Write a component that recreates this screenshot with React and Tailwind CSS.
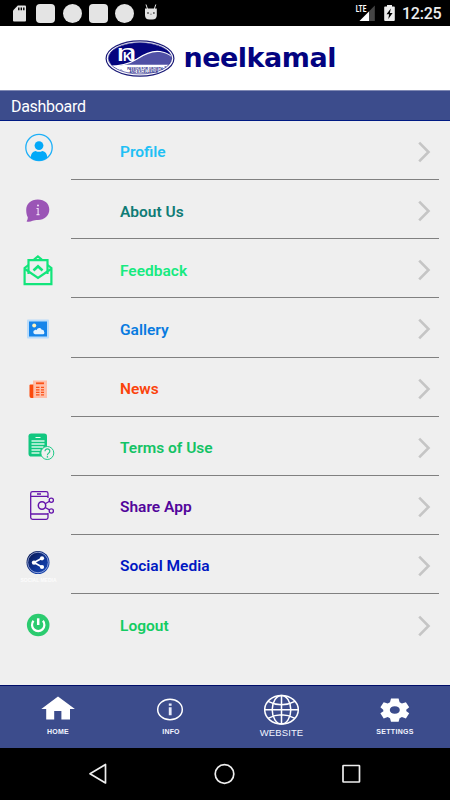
import React from 'react';

const ProfileIcon = () => (
  <svg width="71" height="58" viewBox="0 0 71 58" fill="#03a9f8">
    <circle cx="39" cy="26.5" r="13.2" fill="none" stroke="#1eb0f8" strokeWidth="1.3" />
    <circle cx="39" cy="24.6" r="4.4" />
    <path d="M30.8 36.5c0-4 1.8-6.2 4.8-6.6 2.2 1.2 4.6 1.2 6.8 0 3 .4 4.8 2.6 4.8 6.6-4.4 4.4-12 4.4-16.4 0z" />
  </svg>
);

const AboutIcon = () => (
  <svg width="71" height="58" viewBox="0 0 71 58">
    <path
      d="M37.8 19.4c7 0 11.5 4.2 11.5 10 0 6.3-4.9 10.5-11.3 10.5-2.2 0-4 .2-5.4.9-1.8 1-4.2 1.2-6 .7.6-1.2 1.2-2.2 1.2-4.2-1.1-1.8-1.6-4.9-1.6-7.4 0-6 4.6-10.5 11.6-10.5z"
      fill="#9b55b6"
    />
    <circle cx="38" cy="25.4" r="1" fill="#f3e3fa" />
    <path d="M36.5 28.5h1.6v6M36.5 34.7h3" fill="none" stroke="#eedcf5" strokeWidth="1.2" />
  </svg>
);

const FeedbackIcon = () => (
  <svg width="71" height="58" viewBox="0 0 71 58" fill="none" stroke="#12e57b" strokeWidth="2.2">
    <path d="M28.5 35V21.2h19V35" />
    <path d="M28.5 26l-3.9 3v16.2h26.8V29l-3.9-3" />
    <path d="M25 30l13 8.8L51 30" />
    <path d="M34 20.5l3.9-3.2 3.9 3.2" />
    <path d="M33.5 31.5l4.5-4.3 4.5 4.3" strokeWidth="2.6" />
  </svg>
);

const GalleryIcon = () => (
  <svg width="71" height="58" viewBox="0 0 71 58">
    <rect x="27" y="21.5" width="22" height="19" rx="1" fill="#bbdcfa" />
    <rect x="29" y="23.5" width="18" height="15" fill="#1685ea" />
    <circle cx="34.2" cy="27.5" r="2" fill="#fff3bd" />
    <path d="M35 36.2a2.2 2.2 0 0 1 0-4.3c.9-.1 1.2.1 1.7.3.5-2.7 4.2-3 5-.4 1.7-.3 2.5.8 2.3 2 .8 1 .4 2.4-.9 2.4z" fill="#e6f3fd" />
  </svg>
);

const NewsIcon = () => (
  <svg width="71" height="58" viewBox="0 0 71 58">
    <rect x="33" y="22.5" width="14" height="17.5" fill="#ffbfa9" />
    <path d="M29.5 27.5q0-1 1-1h2.8V40h-2q-1.8 0-1.8-2z" fill="#fb4a0c" />
    <g fill="none" stroke="#fb5116">
      <path d="M36 25.3h8" strokeWidth="1.8" />
      <path d="M36 29.3h3.5m1.5 0h3M36 31.8h3.5m1.5 0h3M36 34.3h3.5m1.5 0h3M36 36.8h3.5m1.5 0h3" strokeWidth="1.2" />
    </g>
  </svg>
);

const TermsIcon = () => (
  <svg width="71" height="58" viewBox="0 0 71 58">
    <rect x="28.5" y="16.5" width="18.5" height="23" rx="2.8" fill="#12c780" />
    <path d="M35.5 20.5h5" stroke="#efffef" strokeWidth="1" />
    <path d="M31.5 24h13M31.5 27h13M31.5 30h12M31.5 33h9M31.5 36h8" stroke="#d5f7e5" strokeWidth="1.3" />
    <circle cx="47.3" cy="36" r="6.5" fill="#efefef" stroke="#21ca88" strokeWidth="1" />
    <path d="M45 34.2c0-3.2 4.9-3 4.8 0 0 2-2.4 1.9-2.4 4" fill="none" stroke="#21ca88" strokeWidth="1.2" />
    <circle cx="47.4" cy="39.9" r=".8" fill="#21ca88" />
  </svg>
);

const ShareAppIcon = () => (
  <svg width="71" height="58" viewBox="0 0 71 58" fill="none" stroke="#6414ab" strokeWidth="1.3">
    <path d="M48 22v-4.5q0-1.800-1.800-1.800H32.500q-1.800 0-1.800 1.800v24q0 1.800 1.800 1.800h13.700q1.800 0 1.800-1.800V37" />
    <path d="M31 20.3h17M31 38h17M37 18h4" />
    <circle cx="42" cy="29.5" r="3.7" strokeWidth="1.5" />
    <circle cx="51.3" cy="24.2" r="2.1" />
    <circle cx="51.3" cy="35" r="2.1" />
    <path d="M45.2 27.7l4.3-2.5M45.2 31.5l4.3 2.4" />
  </svg>
);

const SocialIcon = () => (
  <svg width="71" height="58" viewBox="0 0 71 58">
    <defs>
      <linearGradient id="ball" x1="0" y1="0" x2="1" y2="1">
        <stop offset="0" stopColor="#061245" />
        <stop offset=".6" stopColor="#10379b" />
        <stop offset="1" stopColor="#1748b4" />
      </linearGradient>
    </defs>
    <circle cx="38" cy="27.5" r="11.5" fill="url(#ball)" />
    <circle cx="38" cy="27.5" r="10.3" fill="none" stroke="#c1cdef" strokeWidth=".7" />
    <path d="M42 23.3l-8 4.3 8 4.4" fill="none" stroke="#fff" strokeWidth="1.7" />
    <g fill="#fff">
      <circle cx="42" cy="23.3" r="2.1" />
      <circle cx="34" cy="27.6" r="2.2" />
      <circle cx="42" cy="32" r="2.1" />
    </g>
    <text x="20.5" y="46.6" textLength="36" fontFamily="Liberation Sans, sans-serif" fontWeight="700" fontSize="5" fill="#fcfcfc">
      SOCIAL MEDIA
    </text>
  </svg>
);

const LogoutIcon = () => (
  <svg width="71" height="58" viewBox="0 0 71 58">
    <circle cx="38.2" cy="31" r="11.3" fill="#2bcb6f" />
    <path d="M33.5 26.8a6.2 6.2 0 1 0 9.400 0" fill="none" stroke="#fff" strokeWidth="2.2" />
    <path d="M38.2 24.3v6.7" stroke="#fff" strokeWidth="2.5" />
  </svg>
);

const menuItems = [
  { label: 'Profile', color: 'text-[#1fc0f5]', Icon: ProfileIcon },
  { label: 'About Us', color: 'text-[#107c76]', Icon: AboutIcon },
  { label: 'Feedback', color: 'text-[#17ea80]', Icon: FeedbackIcon },
  { label: 'Gallery', color: 'text-[#087be0]', Icon: GalleryIcon },
  { label: 'News', color: 'text-[#fb430b]', Icon: NewsIcon },
  { label: 'Terms of Use', color: 'text-[#13c365]', Icon: TermsIcon },
  { label: 'Share App', color: 'text-[#52059b]', Icon: ShareAppIcon },
  { label: 'Social Media', color: 'text-[#0017c2]', Icon: SocialIcon },
  { label: 'Logout', color: 'text-[#13cc62]', Icon: LogoutIcon },
];

const StatusBar = () => (
  <div className="h-[26px] shrink-0 bg-black flex items-center justify-between pl-[13px] pr-[8.5px]">
    <div className="flex items-center">
      <svg width="13" height="17" viewBox="0 0 13 17" fill="#e4e4e4">
        <path d="M4.8 0.5H12q1 0 1 1v14q0 1-1 1H1q-1 0-1-1v-10z" />
        <path d="M5.8 2.5v2.8M8.3 2.5v2.8M10.8 2.5v2.8" stroke="#000" strokeWidth="1.4" />
      </svg>
      <div className="ml-[10px] w-[19px] h-[19px] rounded-[4px] bg-[#e4e4e4]"></div>
      <div className="ml-[7.5px] w-[19px] h-[19px] rounded-full bg-[#e4e4e4]"></div>
      <div className="ml-[7px] w-[19px] h-[19px] rounded-[4px] bg-[#e4e4e4]"></div>
      <div className="ml-[7.5px] w-[19px] h-[19px] rounded-full bg-[#e4e4e4]"></div>
      <svg className="ml-[10.5px] mb-[2px]" width="12" height="16" viewBox="145.3 4 12 16" fill="#e4e4e4">
        <path d="M145.3 8.5h11.8v6.5q0 4.5-4.5 4.5h-2.8q-4.5 0-4.5-4.5z" />
        <path d="M147.8 9l-1.5-4.5M154.600 9l1.5-4.5" stroke="#e4e4e4" strokeWidth="1" />
        <circle cx="148.3" cy="13" r=".8" fill="#000" />
        <circle cx="154.2" cy="13" r=".8" fill="#000" />
        <path d="M150.2 14.2h2" stroke="#777" strokeWidth=".7" />
      </svg>
    </div>
    <div className="flex items-center">
      <svg width="46" height="26" viewBox="355 0 46 26">
        <text x="355.8" y="12.4" textLength="10.5" lengthAdjust="spacingAndGlyphs" fontFamily="Roboto, sans-serif" fontWeight="700" fontSize="9.5" fill="#fff">
          LTE
        </text>
        <path d="M374.8 5.5V21H359.5z" fill="#454545" />
        <path d="M369 11.5V21h-9.5z" fill="#fff" />
        <path d="M387 6.5V5h5v1.5h2q.8 0 .8.8V20q0 1-1 1h-8.6q-1 0-1-1V7.3q0-.8.8-.8z" fill="#eee" />
        <path d="M390.8 8.5l-4.3 5.7h2.6l-.8 4.8 4.3-6h-2.7z" fill="#000" />
      </svg>
      <span className="ml-px pt-[2px] text-[16px] leading-none font-medium text-[#eee] tracking-[-0.2px]">12:25</span>
    </div>
  </div>
);

const BrandHeader = () => (
  <header className="h-[64px] shrink-0 bg-white flex pl-[105px]">
    <svg className="shrink-0" width="72" height="64" viewBox="105 26 72 64">
      <defs>
        <clipPath id="crest">
          <ellipse cx="140" cy="58.3" rx="31.5" ry="15.5" />
        </clipPath>
      </defs>
      <ellipse cx="140" cy="58.5" rx="33.9" ry="17.7" fill="#fff" stroke="#1b1b78" strokeWidth="1.2" />
      <g clipPath="url(#crest)">
        <rect x="105" y="40" width="70" height="30" fill="#05057f" />
        <path d="M106 66.5c16 0 24-3 31-7.5 8-5.5 16-8.5 23-7.500 6 .8 10 3 14 7v20h-68z" fill="#5050a5" />
        <path d="M106 66.5c16 0 24-3 31-7.5 8-5.5 16-8.5 23-7.500 6 .8 10 3 14 7" fill="none" stroke="#fff" strokeWidth="1.2" />
        <path d="M106 66c9 0 14-.3 20-1.2h48v14h-68z" fill="#fff" />
      </g>
      <ellipse cx="140" cy="58.3" rx="31.7" ry="15.7" fill="none" stroke="#29298c" strokeWidth=".6" />
      <g fontFamily="Liberation Sans, sans-serif" fill="#fff">
        <text x="116.3" y="61" textLength="20.5" lengthAdjust="spacingAndGlyphs" fontSize="24.5">n</text>
        <text x="123" y="61" textLength="9" lengthAdjust="spacingAndGlyphs" fontWeight="700" fontSize="13">K</text>
      </g>
      <g fontFamily="Liberation Sans, sans-serif" fontWeight="700" fontSize="3.6" fill="#222286">
        <text x="127.2" y="69.5" textLength="35.5" lengthAdjust="spacingAndGlyphs">PASSION FOR GROWTH</text>
        <text x="129.5" y="73.1" textLength="28.5" lengthAdjust="spacingAndGlyphs">AND EXCELLENCE</text>
      </g>
      <path d="M120.5 69.5l2 1M164.5 66.5h1.5" stroke="#6464aa" strokeWidth=".8" />
    </svg>
    <span className="ml-[6.5px] pt-[16px] text-[27px] leading-[32px] font-bold tracking-[-0.5px] text-[#030380] font-['DejaVu_Sans',sans-serif]">
      neelkamal
    </span>
  </header>
);

const MenuRow = ({ item, last }) => {
  const { label, color, Icon } = item;
  return (
    <li className="h-[59.15px] flex">
      <div className="w-[71px] shrink-0">
        <Icon />
      </div>
      <div className={`w-[368px] flex items-center justify-between pl-[49px] pt-[5px] ${last ? '' : 'border-b border-[#808080]'}`}>
        <span className={`pt-px text-[15.5px] font-semibold ${color}`}>{label}</span>
        <svg className="mr-[7px] mb-[1px]" width="15" height="22" viewBox="0 0 15 22" fill="none" stroke="#c5c5c5" strokeWidth="2.6">
          <path d="M2.2 1.7l9.3 9.3-9.3 9.3" />
        </svg>
      </div>
    </li>
  );
};

const HomeIcon = () => (
  <svg width="36" height="36" viewBox="40 692 36 36" fill="#fff">
    <path d="M58 696.5L41.3 709h4.9v10.5h8V711h7.2v8.5H70V709h4.9z" />
  </svg>
);

const InfoIcon = () => (
  <svg width="36" height="36" viewBox="152 692 36 36">
    <ellipse cx="170" cy="709.5" rx="12.3" ry="10.3" fill="none" stroke="#fff" strokeWidth="1.5" />
    <path d="M168.8 703.5h2.8v2.2h-2.8zM168.8 707.2h2.8v8h-2.8z" fill="#e6eafa" />
  </svg>
);

const WebsiteIcon = () => (
  <svg width="36" height="36" viewBox="264 692 36 36" fill="none" stroke="#fff" strokeWidth="1.5">
    <ellipse cx="281.5" cy="709.8" rx="16.8" ry="14.3" />
    <ellipse cx="281.5" cy="709.8" rx="9.3" ry="14.3" />
    <path d="M281.5 695.5v28.6M264.7 709.8h33.6M268 701.3q13.5 7 27 0M268 718.3q13.5-7 27 0" />
  </svg>
);

const SettingsIcon = () => (
  <svg width="36" height="36" viewBox="376 692 36 36" fill="#fff">
    <path
      fillRule="evenodd"
      d="M391 698.5h7.6l1 3.8 2.3 1.2 4-1.2 3.3 5-3 2.5.2 1.4 2.8 2-3.3 5.2-4-1.3-2.3 1.2-1 3.4H391l-1-3.4-2.3-1.2-4 1.3-3.3-5.2 3-2-.2-1.4-2.8-2.5 3.300-5 4 1.2 2.3-1.2zM394.8 706.2c-3 0-5 1.6-5 3.8s2 3.8 5 3.8 5-1.6 5-3.8-2-3.8-5-3.8z"
    />
  </svg>
);

const navItems = [
  { label: 'HOME', Icon: HomeIcon, text: 'text-[7px] font-bold leading-[7px] tracking-[0.3px]' },
  { label: 'INFO', Icon: InfoIcon, text: 'text-[7px] font-bold leading-[7px] tracking-[0.2px] pl-[2px]' },
  { label: 'WEBSITE', Icon: WebsiteIcon, text: 'text-[9.5px] leading-[9px] tracking-[0.1px] pr-px' },
  { label: 'SETTINGS', Icon: SettingsIcon, text: 'text-[7px] font-bold leading-[7px] tracking-[0.3px] pl-[2px]' },
];

const BottomNav = () => (
  <nav className="h-[63px] shrink-0 bg-[#3c4c8c] border-t border-[#000e69] flex pl-[2px] pt-[6px]">
    {navItems.map(({ label, Icon, text }) => (
      <a key={label} className="w-[112px] flex flex-col items-center text-[#f2f4ff] font-['Liberation_Sans',sans-serif]">
        <Icon />
        <span className={text}>{label}</span>
      </a>
    ))}
  </nav>
);

const SystemNav = () => (
  <div className="h-[52px] shrink-0 bg-black flex items-center justify-center gap-[106px] pr-px">
    <svg width="21" height="22" viewBox="87.5 763 21 22" fill="none" stroke="#eee" strokeWidth="1.7" strokeLinejoin="round">
      <path d="M106 764.5v18.5l-15.5-9.2z" />
    </svg>
    <svg width="21" height="22" viewBox="0 0 21 22" fill="none" stroke="#eee" strokeWidth="1.7">
      <circle cx="10.5" cy="11" r="9.3" />
    </svg>
    <svg width="21" height="22" viewBox="0 0 21 22" fill="none" stroke="#eee" strokeWidth="1.7">
      <rect x="2" y="2.5" width="16.5" height="16.5" rx=".5" />
    </svg>
  </div>
);

const App = () => {
  return (
    <div className="w-[450px] h-[800px] overflow-hidden flex flex-col bg-[#efefef] font-['Roboto',sans-serif]">
      <StatusBar />
      <BrandHeader />
      <div className="h-[31px] shrink-0 bg-[#3c4c8c] border-t border-t-[#8089b3] border-b border-b-[#001a83] flex items-center pl-[11px] pt-[2px]">
        <h1 className="text-[16px] tracking-[-0.3px] text-white">Dashboard</h1>
      </div>
      <ul className="h-[564px] shrink-0">
        {menuItems.map((item, i) => (
          <MenuRow key={item.label} item={item} last={i === menuItems.length - 1} />
        ))}
      </ul>
      <BottomNav />
      <SystemNav />
    </div>
  );
};

export default App;
